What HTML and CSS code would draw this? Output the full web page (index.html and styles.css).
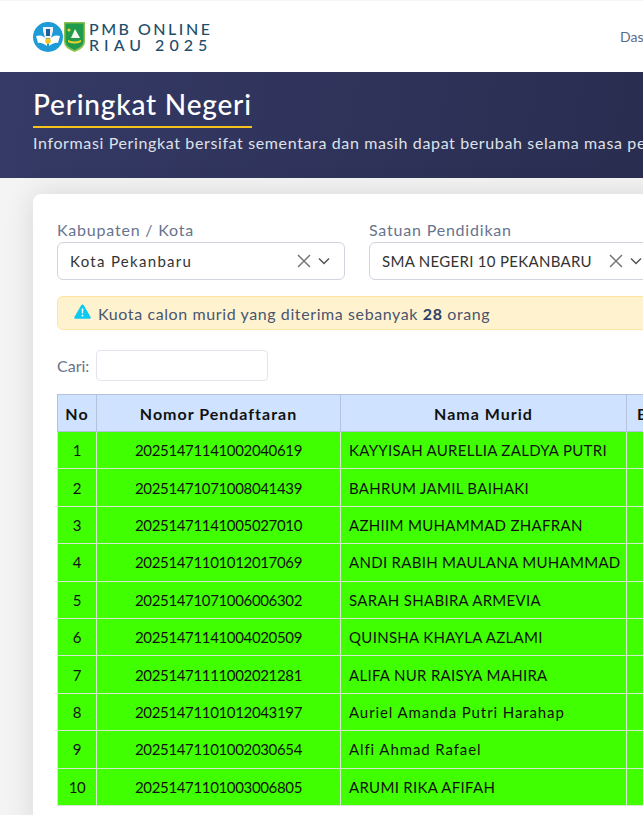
FILE: index.html
```html
<!DOCTYPE html>
<html lang="en">

<head>
    <meta charset="UTF-8">
    <meta name="viewport" content="width=device-width, initial-scale=1.0">
    <title>Peringkat Negeri</title>
    <link rel="stylesheet" href="styles.css">
</head>

<body>
    <div class="page">
        <nav class="navbar">
            <div class="brand">
                <svg class="logo" width="30" height="30" viewBox="0 0 30 30">
                    <circle cx="15" cy="15" r="15" fill="#1e9ad6"/>
                    <path d="M3 14q7-2 11 4v6q-6-4-9-3zM27 14q-7-2-11 4v6q6-4 9-3z" fill="#fff"/>
                    <path d="M10 5h10v4l-2 7h-6l-2-7z" fill="#eef2f8"/>
                    <path d="M13 7h4v7h-4z" fill="#1f5f96"/>
                    <circle cx="15" cy="19" r="2.800" fill="#f6c71e"/>
                </svg>
                <svg class="logo" width="21" height="30" viewBox="0 0 21 30">
                    <path d="M0 0h21v20q0 6-10.500 10Q0 26 0 20z" fill="#8cc152"/>
                    <path d="M1.500 1.500h18v18q0 5-9 8.500-9-3.500-9-8.500z" fill="#1f9b4b"/>
                    <path d="M11 7l5 9H7z" fill="#f7f7ef"/>
                    <path d="M4 18q6.500 3 13 0v2q-6.500 3-13 0z" fill="#f2d230"/>
                    <circle cx="5" cy="8" r="1.600" fill="#f2d230"/>
                </svg>
                <div class="brand-text">
                    <span>PMB ONLINE</span>
                    <span class="brand-year">RIAU 2025</span>
                </div>
            </div>
            <a class="nav-link" href="#">Dashboard</a>
        </nav>

        <header class="banner">
            <h1>Peringkat Negeri</h1>
            <p>Informasi Peringkat bersifat sementara dan masih dapat berubah selama masa pendaftaran berlangsung</p>
        </header>

        <main class="content">
            <section class="card">
                <div class="filters">
                    <div class="field">
                        <label>Kabupaten / Kota</label>
                        <div class="select">
                            <span class="select-value">Kota Pekanbaru</span>
                            <svg class="select-icon" width="14" height="14" viewBox="0 0 14 14"><path d="M1 1l12 12M13 1L1 13" stroke="#777" stroke-width="1.500" fill="none"/></svg>
                            <svg class="select-icon" width="12" height="12" viewBox="0 0 12 12"><path d="M1 3.500l5 5 5-5" stroke="#555" stroke-width="1.500" fill="none"/></svg>
                        </div>
                    </div>
                    <div class="field">
                        <label>Satuan Pendidikan</label>
                        <div class="select">
                            <span class="select-value select-caps">SMA NEGERI 10 PEKANBARU</span>
                            <svg class="select-icon" width="14" height="14" viewBox="0 0 14 14"><path d="M1 1l12 12M13 1L1 13" stroke="#777" stroke-width="1.500" fill="none"/></svg>
                            <svg class="select-icon" width="12" height="12" viewBox="0 0 12 12"><path d="M1 3.500l5 5 5-5" stroke="#555" stroke-width="1.500" fill="none"/></svg>
                        </div>
                    </div>
                </div>

                <div class="alert">
                    <svg class="alert-icon" width="17" height="15" viewBox="0 0 17 15">
                        <path d="M8.500 0.500q.8 0 1.300.8l6.800 11.600q.6 1.600-1.100 1.900H1.500q-1.700-.3-1.100-1.900L7.200 1.300q.5-.8 1.300-.8z" fill="#0dcaf0"/>
                        <path d="M7.700 4.500h1.600l-.2 5H7.900zM7.700 10.800h1.600v1.600H7.700z" fill="#fff"/>
                    </svg>
                    <span>Kuota calon murid yang diterima sebanyak <b>28</b> orang</span>
                </div>

                <div class="search">
                    <label>Cari:</label>
                    <input type="text">
                </div>

                <table class="rank-table">
                    <thead>
                        <tr>
                            <th class="col-no">No</th>
                            <th class="col-reg">Nomor Pendaftaran</th>
                            <th class="col-name">Nama Murid</th>
                            <th class="col-next">Bobot Nilai</th>
                        </tr>
                    </thead>
                    <tbody>
                        <tr><td class="center">1</td><td class="center">20251471141002040619</td><td>KAYYISAH AURELLIA ZALDYA PUTRI</td><td></td></tr>
                        <tr><td class="center">2</td><td class="center">20251471071008041439</td><td>BAHRUM JAMIL BAIHAKI</td><td></td></tr>
                        <tr><td class="center">3</td><td class="center">20251471141005027010</td><td>AZHIIM MUHAMMAD ZHAFRAN</td><td></td></tr>
                        <tr><td class="center">4</td><td class="center">20251471101012017069</td><td>ANDI RABIH MAULANA MUHAMMAD</td><td></td></tr>
                        <tr><td class="center">5</td><td class="center">20251471071006006302</td><td>SARAH SHABIRA ARMEVIA</td><td></td></tr>
                        <tr><td class="center">6</td><td class="center">20251471141004020509</td><td>QUINSHA KHAYLA AZLAMI</td><td></td></tr>
                        <tr><td class="center">7</td><td class="center">20251471111002021281</td><td>ALIFA NUR RAISYA MAHIRA</td><td></td></tr>
                        <tr><td class="center">8</td><td class="center">20251471101012043197</td><td class="name-mixed">Auriel Amanda Putri Harahap</td><td></td></tr>
                        <tr><td class="center">9</td><td class="center">20251471101002030654</td><td class="name-mixed">Alfi Ahmad Rafael</td><td></td></tr>
                        <tr><td class="center">10</td><td class="center">20251471101003006805</td><td>ARUMI RIKA AFIFAH</td><td></td></tr>
                    </tbody>
                </table>
            </section>
        </main>
    </div>
</body>

</html>
```

FILE: styles.css
```css
html,
body {
    margin: 0;
    height: 100%;
    overflow: hidden;
}

body {
    background-color: #f4f4f4;
    color: #1f2a44;
    font-family: "Lato", "Open Sans", sans-serif;
    font-size: 15px;
}

.page {
    width: 1100px;
}

.navbar {
    display: flex;
    align-items: center;
    height: 71px;
    margin-top: 1px;
    padding: 0 33px;
    background-color: #fff;
}

.brand {
    display: flex;
    align-items: center;
    gap: 1px;
    width: 587px;
}

.logo {
    flex: none;
}

.brand-text {
    display: flex;
    flex-direction: column;
    margin-left: 3px;
    color: #1f4e6b;
    font-size: 16px;
    font-weight: 500;
    line-height: 16px;
    letter-spacing: 2.5px;
}

.brand-year {
    letter-spacing: 5px;
}

.nav-link {
    color: #5a6a8c;
    font-size: 14px;
    text-decoration: none;
}

.banner {
    box-sizing: border-box;
    height: 106px;
    padding: 16px 33px 0;
    background: linear-gradient(100deg, #353a66, #292d50 60%);
    color: #fff;
}

.banner h1 {
    display: table;
    margin: 0 0 5px;
    padding-bottom: 5px;
    border-bottom: 2px solid #f6c31c;
    font-size: 28px;
    font-weight: 500;
    line-height: 33px;
    letter-spacing: 0.8px;
}

.banner p {
    margin: 0;
    color: #dfe1ea;
    font-size: 16px;
    line-height: 20px;
    letter-spacing: 0.63px;
    white-space: nowrap;
}

.content {
    padding: 16px 33px;
}

.card {
    padding: 24px 24px 24px;
    border-radius: 8px;
    background-color: #fff;
    box-shadow: 0 0 30px rgba(0, 0, 0, 0.12);
}

.filters {
    display: flex;
    gap: 24px;
}

.field {
    width: 288px;
}

.field label {
    display: block;
    color: #67748e;
    font-size: 16px;
    line-height: 24px;
    letter-spacing: 0.8px;
}

.select {
    display: flex;
    align-items: center;
    box-sizing: border-box;
    height: 38px;
    padding: 0 14px 0 12px;
    border: 1px solid #cfd4df;
    border-radius: 6px;
    color: #333;
    font-size: 15px;
}

.select-value {
    flex: 1;
    letter-spacing: 1.3px;
    white-space: nowrap;
}

.select-caps {
    letter-spacing: 0.3px;
}

.select-icon {
    margin-left: 7px;
}

.alert {
    display: flex;
    align-items: center;
    gap: 7px;
    box-sizing: border-box;
    height: 34px;
    margin-top: 16px;
    padding: 0 16px;
    border: 1px solid #ffe5a0;
    border-radius: 6px;
    background-color: #fff2cf;
    color: #4a5570;
    font-size: 16px;
    letter-spacing: 0.6px;
}

.alert-icon {
    margin-top: -4px;
}

.alert b {
    color: #2d3f66;
}

.search {
    display: flex;
    align-items: center;
    gap: 7px;
    margin-top: 20px;
    color: #67748e;
    font-size: 16px;
}

.search input {
    box-sizing: border-box;
    width: 172px;
    height: 31px;
    border: 1px solid #e2e5ec;
    border-radius: 4px;
}

.rank-table {
    margin-top: 13px;
    border-collapse: collapse;
    table-layout: fixed;
    width: 900px;
    color: #111;
    font-size: 15px;
    letter-spacing: 0.3px;
}

.rank-table th {
    height: 36px;
    padding: 0;
    border: 1px solid #b4c3dc;
    background-color: #cfe2ff;
    font-size: 16px;
    font-weight: 700;
    letter-spacing: 1px;
}

.rank-table th.col-next {
    padding-left: 10px;
    text-align: left;
}

.rank-table td {
    height: 37.400px;
    padding: 0 8px;
    border: 1px solid #d8e8d0;
    background-color: #40ff00;
    box-sizing: border-box;
    white-space: nowrap;
}

.rank-table .center {
    letter-spacing: -0.35px;
    text-align: center;
}

.rank-table .name-mixed {
    letter-spacing: 0.9px;
}

.col-no {
    width: 38px;
}

.col-reg {
    width: 243px;
}

.col-name {
    width: 285px;
}
```
